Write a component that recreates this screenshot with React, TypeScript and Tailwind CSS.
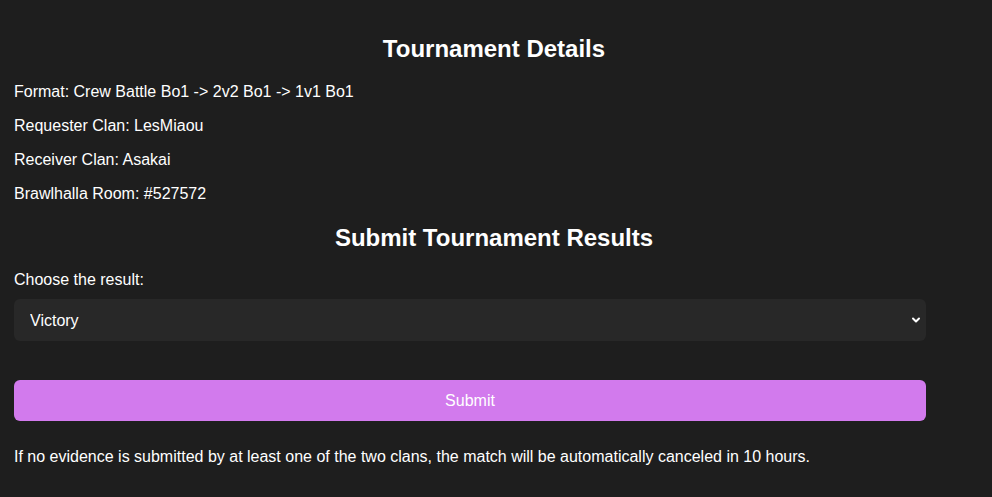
import { ChevronDown } from 'lucide-react';

const details = [
  'Format: Crew Battle Bo1 -> 2v2 Bo1 -> 1v1 Bo1',
  'Requester Clan: LesMiaou',
  'Receiver Clan: Asakai',
  'Brawlhalla Room: #527572',
];

export default function App() {
  return (
    <div
      className="min-h-[497px] w-full bg-[#1e1e1e] text-white text-base"
      style={{ fontFamily: '"Liberation Sans", Arial, sans-serif' }}
    >
      <div className="pt-[35px] pb-6">
        {/* Details */}
        <h2 className="text-center text-[24px] font-bold leading-[28px] pr-[4px]">Tournament Details</h2>
        <div className="mt-[20px] px-[14px] flex flex-col gap-4">
          {details.map((d) => (
            <p key={d} className="leading-[18px]">{d}</p>
          ))}
        </div>

        {/* Results form */}
        <h2 className="mt-[21px] text-center text-[24px] font-bold leading-[28px] pr-[4px]">
          Submit Tournament Results
        </h2>
        <div className="px-[14px]">
          <label className="block mt-[19px] leading-[18px]">Choose the result:</label>
          <div className="relative mt-[10px] w-[912px]">
            <select
              defaultValue="victory"
              className="appearance-none w-full h-[42px] rounded-md bg-[#282828] text-white pl-4 pr-8 pt-[2px] outline-none"
            >
              <option value="victory">Victory</option>
              <option value="defeat">Defeat</option>
            </select>
            <ChevronDown
              size={12}
              strokeWidth={4}
              className="absolute right-[4px] top-[15px] text-white pointer-events-none"
            />
          </div>
          <button className="mt-[39px] w-[912px] h-[41px] rounded-md bg-[#d27aed] text-white">
            Submit
          </button>
          <p className="mt-[27px] leading-[18px]">
            If no evidence is submitted by at least one of the two clans, the match will be automatically canceled in 10 hours.
          </p>
        </div>
      </div>
    </div>
  );
}
